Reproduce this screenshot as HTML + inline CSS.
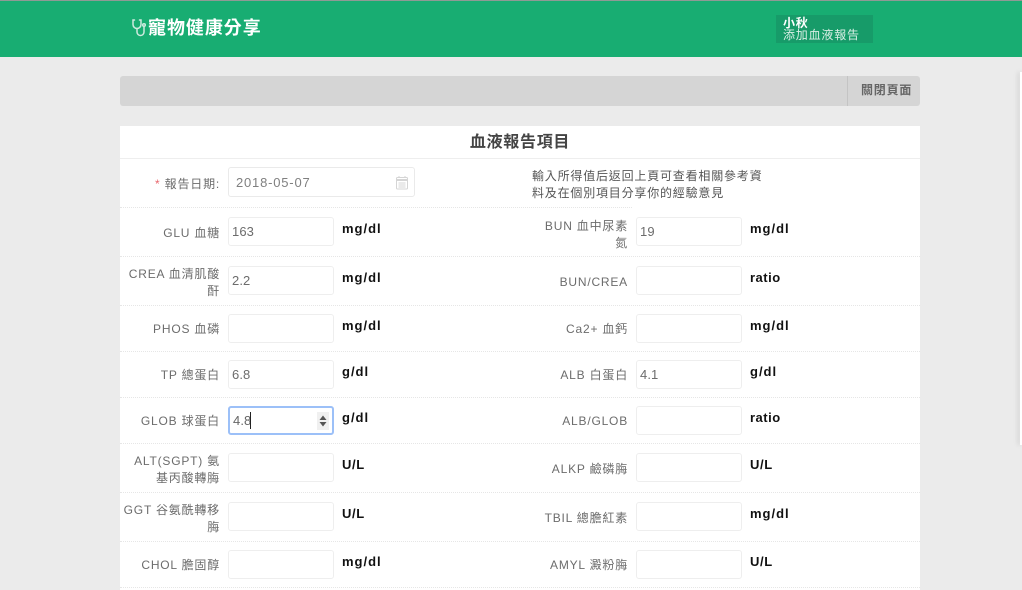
<!DOCTYPE html>
<html lang="zh-Hant"><head><meta charset="utf-8"><title>寵物健康分享</title>
<style>
html,body{margin:0;padding:0}
body{width:1022px;height:590px;overflow:hidden;background:#ebebeb;position:relative;font-family:"Liberation Sans","Noto Sans CJK TC",sans-serif;font-size:12px;letter-spacing:.8px;color:#777}
div{position:absolute;box-sizing:border-box}
.l{width:100px;text-align:right;line-height:17px;color:#6c6c6c;margin-top:1px}
.lr{left:528px}.ll{left:120px}
.i{width:106px;height:29px;background:#fff;border:1px solid #eee;border-radius:3px;line-height:27px;padding-left:3px;color:#6c6c6c;font-size:13px;letter-spacing:.1px}
.il{left:228px}.ir{left:636px}
.u{font-weight:bold;font-size:13px;letter-spacing:1px;color:#111;line-height:16px;margin-top:1px}
.ul{left:342px}.ur{left:750px}
.d{left:120px;width:800px;height:0;border-top:1px dotted #e6e6e6}
</style></head><body>
<div style="left:0;top:0;width:1022px;height:57px;background:#18ad72;border-top:1px solid #8f9a95"></div>
<svg style="position:absolute;left:131px;top:18px" width="17" height="20" viewBox="0 0 17 20" fill="none" stroke="#cdeade" stroke-width="1.5" stroke-linecap="round"><path d="M3.5 2H2v4.5a4 4 0 0 0 8 0V2H8.5"/><path d="M6 10.5V14a3.5 3.5 0 0 0 7 0V8.5"/><circle cx="13" cy="7" r="1.3"/></svg>
<div style="left:148px;top:15px;font-size:18px;font-weight:bold;line-height:26px;color:#fff;letter-spacing:.95px;white-space:nowrap">寵物健康分享</div>
<div style="left:776px;top:15px;width:97px;height:28px;background:#179b69"></div>
<div style="left:783px;top:17px;font-weight:bold;color:#fff;line-height:12px">小秋</div>
<div style="left:783px;top:29px;color:#d8eee5;line-height:13px;white-space:nowrap">添加血液報告</div>

<div style="left:120px;top:76px;width:800px;height:30px;background:#d5d5d5;border-radius:3px"></div>
<div style="left:847px;top:76px;width:1px;height:30px;background:#c4c4c4"></div>
<div style="left:861px;top:81px;font-weight:bold;color:#666;line-height:18px;white-space:nowrap">關閉頁面</div>

<div style="left:1020px;top:72px;width:2px;height:373px;background:#fff;box-shadow:-2px 0 5px rgba(0,0,0,.15)"></div>

<div style="left:120px;top:126px;width:800px;height:464px;background:#fff"></div>
<div style="left:120px;top:133px;width:800px;text-align:center;font-size:16px;font-weight:bold;line-height:20px;color:#444;letter-spacing:.7px">血液報告項目</div>
<div style="left:120px;top:158px;width:800px;height:1px;background:#eee"></div>

<div class="d" style="top:207px;width:512px"></div>
<div class="d" style="top:256px"></div>
<div class="d" style="top:305px"></div>
<div class="d" style="top:351px"></div>
<div class="d" style="top:397px"></div>
<div class="d" style="top:443px"></div>
<div class="d" style="top:492px"></div>
<div class="d" style="top:541px"></div>
<div class="d" style="top:587px"></div>

<div class="l ll" style="top:175px"><span style="color:#e9686e">*</span> 報告日期:</div>
<div style="left:228px;top:167px;width:187px;height:30px;background:#fff;border:1px solid #eaeaea;border-radius:3px;line-height:29px;padding-left:7px;color:#808080;font-size:13px;letter-spacing:.8px">2018-05-07</div>
<svg style="position:absolute;left:395px;top:175px" width="14" height="15" viewBox="0 0 14 15" fill="none" stroke="#d5d5d5"><rect x="1.5" y="2.5" width="11" height="11.5" rx="1"/><path d="M1.5 5h11" stroke-width="2"/><path d="M4 1v2M10 1v2M3.5 8h7M3.5 10h7M3.5 12h7" /></svg>
<div style="left:532px;top:168px;line-height:17px;color:#555;white-space:nowrap">輸入所得值后返回上頁可查看相關參考資<br>料及在個別項目分享你的經驗意見</div>

<div class="l ll" style="top:224px">GLU 血糖</div>
<div class="i il" style="top:217px">163</div>
<div class="u ul" style="top:220px">mg/dl</div>
<div class="l lr" style="top:217px">BUN 血中尿素<br>氮</div>
<div class="i ir" style="top:217px">19</div>
<div class="u ur" style="top:220px">mg/dl</div>

<div class="l ll" style="top:265px">CREA 血清肌酸<br>酐</div>
<div class="i il" style="top:266px">2.2</div>
<div class="u ul" style="top:269px">mg/dl</div>
<div class="l lr" style="top:273px">BUN/CREA</div>
<div class="i ir" style="top:266px"></div>
<div class="u ur" style="top:269px;letter-spacing:.5px">ratio</div>

<div class="l ll" style="top:320px">PHOS 血磷</div>
<div class="i il" style="top:314px"></div>
<div class="u ul" style="top:317px">mg/dl</div>
<div class="l lr" style="top:320px">Ca2+ 血鈣</div>
<div class="i ir" style="top:314px"></div>
<div class="u ur" style="top:317px">mg/dl</div>

<div class="l ll" style="top:366px">TP 總蛋白</div>
<div class="i il" style="top:360px">6.8</div>
<div class="u ul" style="top:363px">g/dl</div>
<div class="l lr" style="top:366px">ALB 白蛋白</div>
<div class="i ir" style="top:360px">4.1</div>
<div class="u ur" style="top:363px">g/dl</div>

<div class="l ll" style="top:412px">GLOB 球蛋白</div>
<div class="i il" style="top:406px;height:29px;border:2px solid #9cc0f8;padding-left:3px;line-height:26px;color:#666">4.8</div>
<div style="left:250px;top:412px;width:1px;height:17px;background:#222"></div>
<div style="left:317px;top:412px;width:12px;height:18px;background:#f0f0f0"></div>
<svg style="position:absolute;left:317px;top:412px" width="12" height="18" viewBox="0 0 12 18" fill="#555"><path d="M6 3.5 9.5 8h-7zM6 14.5 2.5 10h7z"/></svg>
<div class="u ul" style="top:409px">g/dl</div>
<div class="l lr" style="top:412px">ALB/GLOB</div>
<div class="i ir" style="top:406px"></div>
<div class="u ur" style="top:409px;letter-spacing:.5px">ratio</div>

<div class="l ll" style="top:452px">ALT(SGPT) 氨<br>基丙酸轉脢</div>
<div class="i il" style="top:453px"></div>
<div class="u ul" style="top:456px;letter-spacing:.6px">U/L</div>
<div class="l lr" style="top:460px">ALKP 鹼磷脢</div>
<div class="i ir" style="top:453px"></div>
<div class="u ur" style="top:456px;letter-spacing:.6px">U/L</div>

<div class="l ll" style="top:501px;left:110px;width:110px">GGT 谷氨酰轉移<br>脢</div>
<div class="i il" style="top:502px"></div>
<div class="u ul" style="top:505px;letter-spacing:.6px">U/L</div>
<div class="l lr" style="top:509px">TBIL 總膽紅素</div>
<div class="i ir" style="top:502px"></div>
<div class="u ur" style="top:505px">mg/dl</div>

<div class="l ll" style="top:556px">CHOL 膽固醇</div>
<div class="i il" style="top:550px"></div>
<div class="u ul" style="top:553px">mg/dl</div>
<div class="l lr" style="top:556px">AMYL 澱粉脢</div>
<div class="i ir" style="top:550px"></div>
<div class="u ur" style="top:553px;letter-spacing:.6px">U/L</div>
</body></html>
